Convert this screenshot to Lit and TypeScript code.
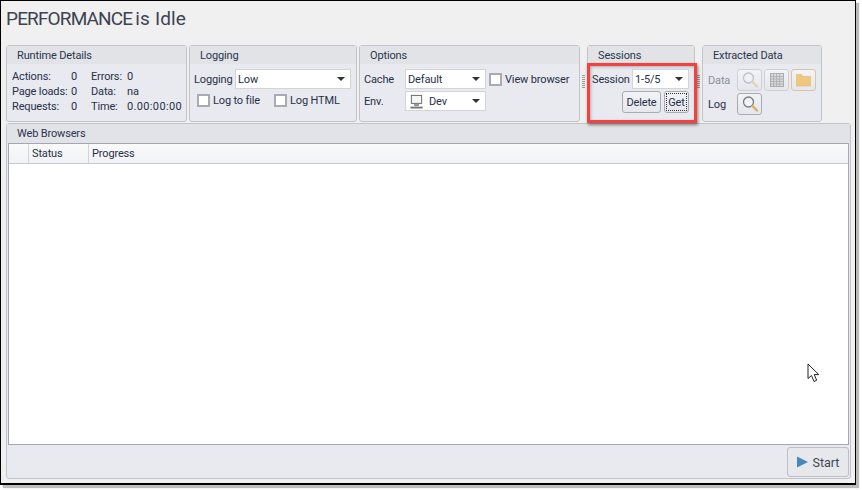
import { LitElement, html, css, svg } from "lit";
import { customElement } from "lit/decorators.js";

const magnifier = (dim: boolean) => svg`<svg class="ico" viewBox="0 0 18 18" width="18" height="18" style="opacity:${dim ? 0.4 : 1}">
  <circle cx="7.5" cy="7" r="5" fill="#f2f5f8" stroke="#777c81" stroke-width="1.3"/>
  <path d="M11.5 11 L16 15.5" stroke="#dcae62" stroke-width="2.4" stroke-linecap="round"/></svg>`;

const grid = svg`<svg class="ico" viewBox="0 0 16 16" width="16" height="16" style="opacity:.55">
  <rect x="1.5" y="1.5" width="13" height="13" fill="#c9c9c9" stroke="#777"/>
  <path d="M1.5 4.5H14.5M1.5 7H14.5M1.5 9.5H14.5M1.5 12H14.5M4.5 1.5V14.5M7.5 1.5V14.5M10.5 1.5V14.5" stroke="#777" stroke-width=".8"/></svg>`;

const folder = svg`<svg class="ico" viewBox="0 0 16 16" width="17" height="16">
  <path d="M1 2.5H6L7.5 4.5H15V14H1Z" fill="#f0c77e" stroke="#e5b768" stroke-width=".6"/></svg>`;

const monitor = svg`<svg viewBox="0 0 16 16" width="15" height="15">
  <rect x="2.5" y="1.5" width="11" height="8.5" fill="#f5f5f5" stroke="#666"/>
  <path d="M6 10.5V12.5H10V10.5" fill="#999" stroke="#888"/>
  <path d="M1.5 14.5H14.5" stroke="#777" stroke-width="2"/></svg>`;

@customElement("app-root")
export class AppRoot extends LitElement {
  static styles = css`
    :host { display: block; width: 862px; height: 490px; background: #fff; overflow: hidden; position: relative;
      font-family: "Roboto", "Noto Sans", sans-serif; font-size: 11px; letter-spacing: -0.15px; color: #27304a; }
    * { box-sizing: border-box; }
    .window { width: 856px; height: 485px; background: #f0f0f0; border: 1px solid #000; border-width: 1px 1px 2px 1px;
      box-shadow: 3px 3px 1px #bdbdbd; padding: 0 4px 0 5px; display: flex; flex-direction: column; }
    .title { height: 44px; padding: 6px 0 0 0; font-size: 19px; line-height: 24px;
      color: #3d4350; letter-spacing: 0.15px; white-space: nowrap; }
    .title b { font-weight: 400; margin-right: 3px; letter-spacing: -0.85px; }
    .ribbon { display: flex; height: 77px; align-items: stretch; }
    .panel { border: 1px solid #c3c4c9; border-radius: 3px; background: #e9eaef; display: flex; flex-direction: column; }
    .head { height: 18px; background: #e2e3e6; padding-left: 10px; line-height: 20px; flex: none; color: #2b3450; white-space: nowrap; }
    .r1 { width: 181px; margin-right: 2px; }
    .r2 { width: 168px; margin-right: 2px; }
    .r3 { width: 221px; }
    .r4 { width: 108px; margin-left: 7px; }
    .r5 { width: 120px; margin-left: 7px; }
    .grip { width: 7px; flex: none; position: relative; }
    .grip::after { content: ""; position: absolute; left: 2px; top: 30px; width: 3px; height: 14px;
      background: repeating-linear-gradient(#9a9a9a 0 1px, transparent 1px 2px); }
    .details { display: grid; grid-template-columns: 59px 20px 36px auto; grid-auto-rows: 15px; padding: 5px 0 0 5px; line-height: 15px; white-space: nowrap; }
    .clock { letter-spacing: 0.35px; }
    .row { display: flex; align-items: center; }
    .body { padding: 5px 0 0 4px; display: flex; flex-direction: column; gap: 4px; }
    .lab { flex: none; }
    .select { height: 20px; background: #fff; border: 1px solid #d3d4d8; display: flex; align-items: center; padding: 0 5px 0 2px; position: relative; }
    .select::after { content: ""; margin-left: auto; border: 4px solid transparent; border-top: 4px solid #333; border-bottom: 0; }
    .chk { display: inline-flex; align-items: center; gap: 3px; white-space: nowrap; flex: none; }
    .box { width: 13px; height: 13px; background: #fff; border: 2px solid #a9abb4; flex: none; }
    .btn { height: 22px; border: 1px solid #a9abb2; border-radius: 3px; background: linear-gradient(#f2f3f6, #e6e7eb);
      display: inline-flex; align-items: center; justify-content: center; flex: none; }
    .btn.dim { border-color: #cfd0d4; }
    .focus { position: relative; }
    .focus::after { content: ""; position: absolute; inset: 1px; border: 1px dotted #333; }
    .ico { display: block; }
    .browsers { margin-top: 1px; height: 356px; width: 845px; position: relative; }
    .browsers .head { height: 19px; line-height: 19px; }
    .table { margin: 0 1px; height: 302px; background: #fff; border: 1px solid #a4a6b2; display: flex; flex-direction: column; }
    .thead { height: 20px; display: flex; border-bottom: 1px solid #c8cad2; background: linear-gradient(#fafafa, #f1f2f5); line-height: 19px; }
    .thead div { border-right: 1px solid #d3d5db; padding-left: 3px; }
    .c0 { width: 20px; }
    .c1 { width: 60px; }
    .c2 { border-right: 0 !important; }
    .foot { flex: 1; display: flex; justify-content: flex-end; align-items: flex-start; padding: 2px 1px 0 0; }
    .start { width: 62px; height: 30px; font-size: 12.5px; letter-spacing: 0; gap: 5px; border-color: #bdbfc6; background: #e7e8ec; color: #3c4557; }
    .mark { position: absolute; left: 587px; top: 63px; width: 110px; height: 60px; border: 3px solid #f2413f;
      box-shadow: 1px 2px 3px rgba(0,0,0,.45), inset 1px 1px 3px rgba(0,0,0,.25); pointer-events: none; }
    .cursor { position: absolute; left: 807px; top: 363px; }
  `;

  render() {
    return html`
      <div class="window">
        <div class="title"><b>PERFORMANCE</b>is Idle</div>
        <div class="ribbon">
          <section class="panel r1">
            <div class="head">Runtime Details</div>
            <div class="details">
              <span>Actions:</span><span>0</span><span>Errors:</span><span>0</span>
              <span>Page loads:</span><span>0</span><span>Data:</span><span>na</span>
              <span>Requests:</span><span>0</span><span>Time:</span><span class="clock">0.00:00:00</span>
            </div>
          </section>
          <section class="panel r2">
            <div class="head">Logging</div>
            <div class="body">
              <div class="row"><span class="lab" style="width:41px">Logging</span><div class="select" style="width:116px">Low</div></div>
              <div class="row" style="padding:1px 0 0 3px">
                <label class="chk" style="width:77px"><span class="box"></span>Log to file</label>
                <label class="chk"><span class="box"></span>Log HTML</label>
              </div>
            </div>
          </section>
          <section class="panel r3">
            <div class="head">Options</div>
            <div class="body" style="gap:2px">
              <div class="row"><span class="lab" style="width:41px">Cache</span><div class="select" style="width:81px">Default</div>
                <label class="chk" style="margin-left:3px"><span class="box"></span>View browser</label></div>
              <div class="row"><span class="lab" style="width:41px">Env.</span><div class="select" style="width:81px;gap:5px;padding-left:3px">${monitor}Dev</div></div>
            </div>
          </section>
          <div class="grip" style="margin-right:-7px"></div>
          <section class="panel r4">
            <div class="head">Sessions</div>
            <div class="body" style="gap:2px">
              <div class="row"><span class="lab" style="width:40px">Session</span><div class="select" style="width:57px">1-5/5</div></div>
              <div class="row" style="gap:3px;justify-content:flex-end;padding-right:5px">
                <div class="btn" style="width:39px">Delete</div>
                <div class="btn focus" style="width:25px">Get</div>
              </div>
            </div>
          </section>
          <div class="grip" style="margin-right:-7px"></div>
          <section class="panel r5">
            <div class="head">Extracted Data</div>
            <div class="body" style="gap:2px;padding-left:5px">
              <div class="row"><span class="lab" style="width:29px;opacity:.5">Data</span>
                <div class="btn dim" style="width:25px">${magnifier(true)}</div>
                <div class="btn dim" style="width:25px;margin-left:2px">${grid}</div>
                <div class="btn dim" style="width:25px;margin-left:2px;border-color:#d9c69e">${folder}</div>
              </div>
              <div class="row"><span class="lab" style="width:29px">Log</span>
                <div class="btn" style="width:25px">${magnifier(false)}</div>
              </div>
            </div>
          </section>
        </div>
        <section class="panel browsers">
          <div class="head">Web Browsers</div>
          <div class="table">
            <div class="thead"><div class="c0"></div><div class="c1">Status</div><div class="c2">Progress</div></div>
          </div>
          <div class="foot">
            <div class="btn start"><svg viewBox="0 0 12 13" width="11" height="12"><path d="M0 0.5L12 6.5L0 12.5Z" fill="#4a86bd"/></svg>Start</div>
          </div>
        </section>
      </div>
      <div class="mark"></div>
      <svg class="cursor" viewBox="0 0 14 20" width="14" height="20">
        <path d="M1 1V15.5L4.5 12.5L7 18.5L9.7 17.3L7.2 11.6H11.8Z" fill="#fff" stroke="#222" stroke-width="1"/>
      </svg>
    `;
  }
}
